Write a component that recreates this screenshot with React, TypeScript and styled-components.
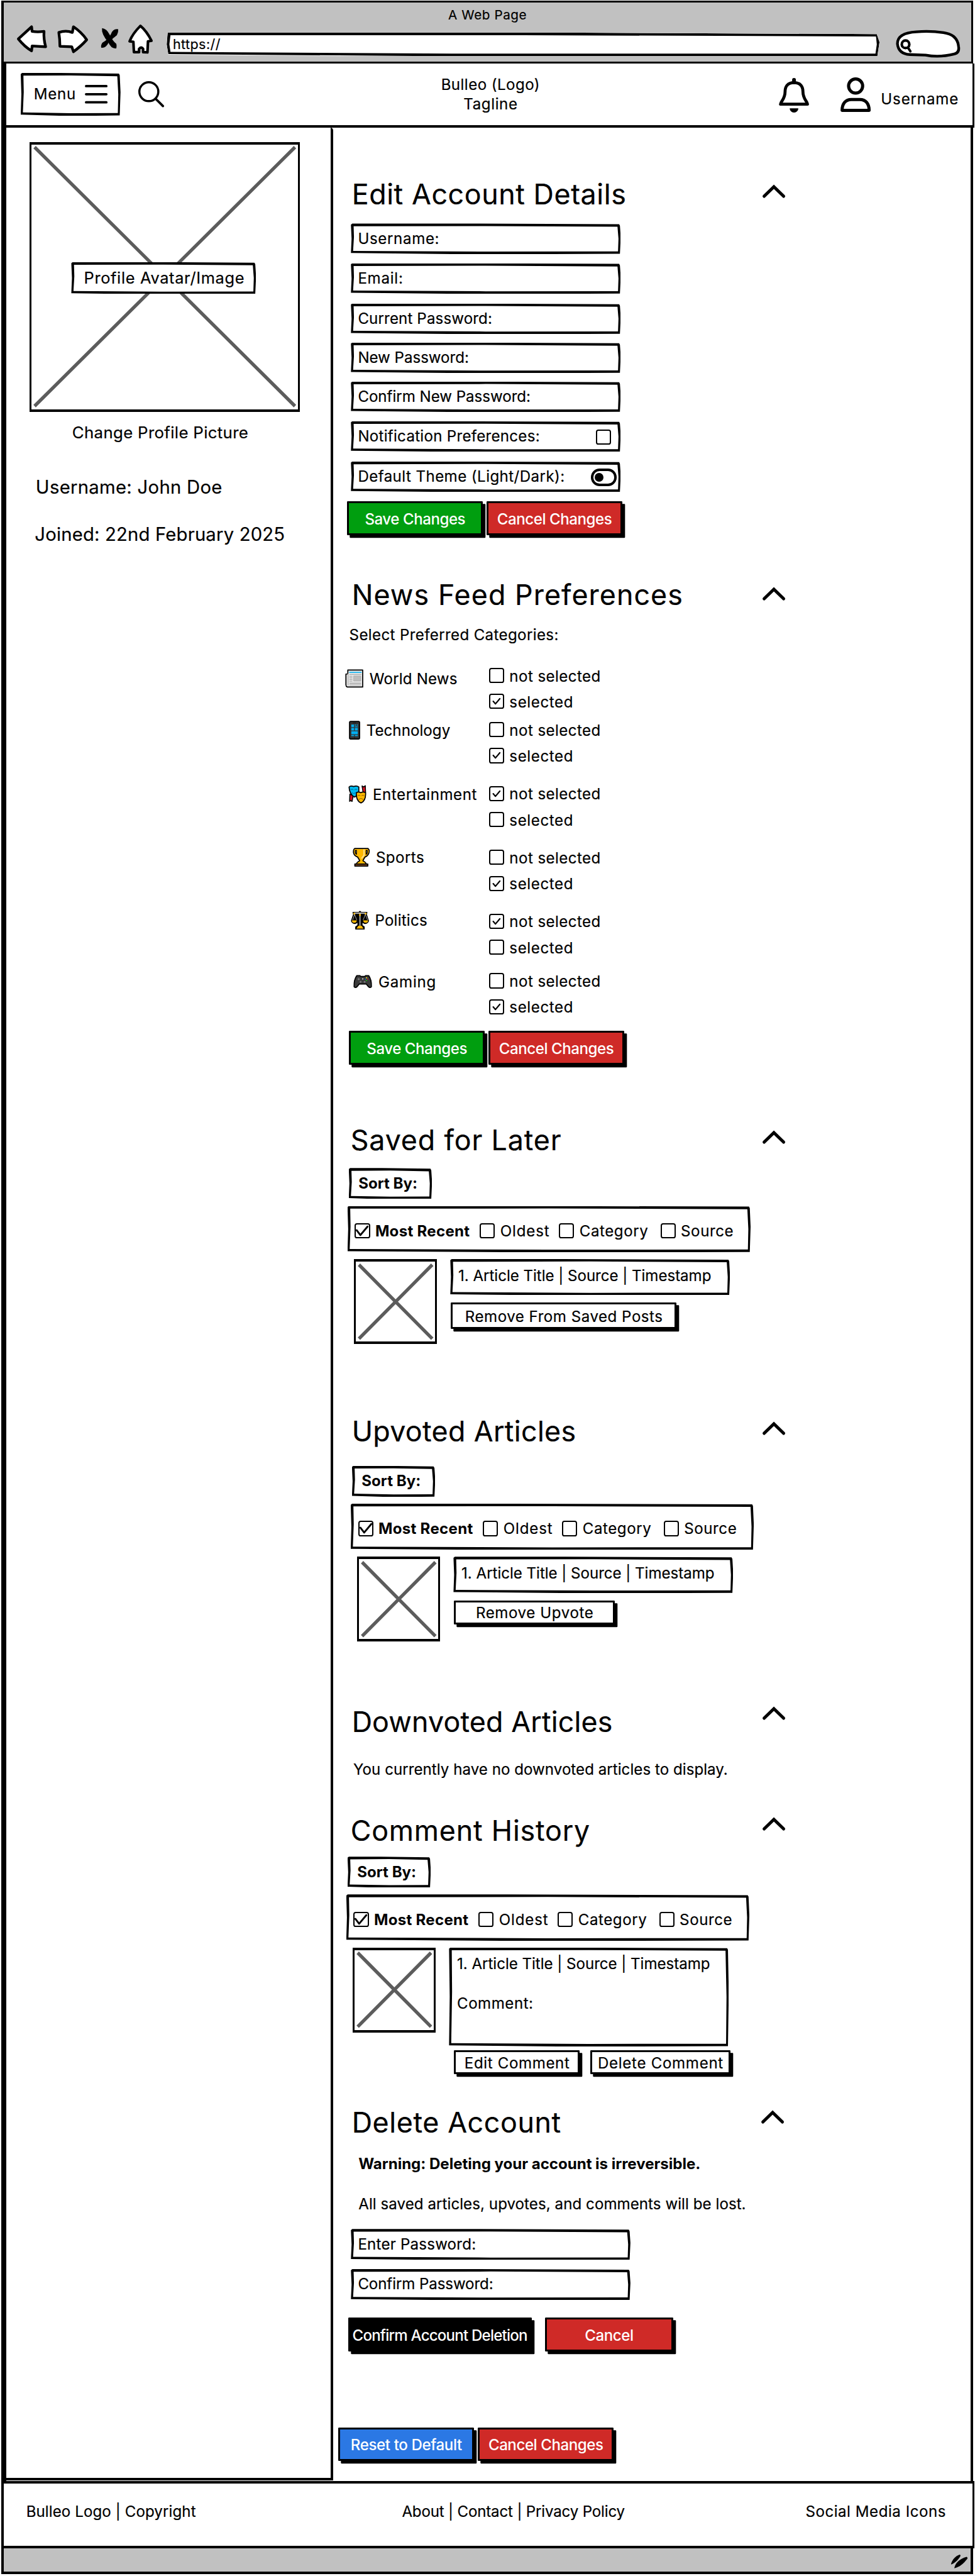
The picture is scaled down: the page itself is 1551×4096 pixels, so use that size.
import React, { useLayoutEffect, useRef, useState } from 'react';
import styled, { createGlobalStyle, css } from 'styled-components';

/* One rem is ten design units, so 2.8rem is a 28-unit text size. */
const GlobalStyle = createGlobalStyle`
  *, *::before, *::after { box-sizing: border-box; }
  html { font-size: 8.607px; background: #fff; }
  body { margin: 0; overflow: hidden; }
  body, button { font-family: Inter, "Open Sans", sans-serif; color: #000; }
  svg { display: block; flex: none; overflow: visible; }
`;

const GREEN = '#009e0f';
const RED = '#cf2a27';
const BLUE = '#2b78e4';
const GREY = '#c1c1c1';

/* ---------- text ---------- */

const TextBox = styled.span<{ $w: number; $size: number; $lh: number; $weight: number; $color: string; $dy: number }>`
  display: block;
  flex: none;
  width: ${p => p.$w / 10}rem;
  font-size: ${p => p.$size / 10}rem;
  line-height: ${p => p.$lh / 10}rem;
  font-weight: ${p => p.$weight};
  color: ${p => p.$color};
  margin: ${p => p.$dy / 10 + 0.18}rem 0 -0.18rem;
  white-space: nowrap;
  -webkit-text-stroke: ${p => (p.$weight === 400 ? 0.2 : 0)}px;
`;

const TextRun = styled.span`
  display: inline-block;
  margin-left: -0.045em;
`;

type TextProps = {
  children: string;
  w: number;
  size?: number;
  lh?: number;
  weight?: number;
  color?: string;
  dy?: number;
};

/* Tracks its letters out or in so that the line fills the width it is given. */
function Text({ children, w, size = 28, lh = 40, weight = 400, color = '#000', dy = 0 }: TextProps) {
  const ref = useRef<HTMLSpanElement>(null);
  const [tracking, setTracking] = useState(0);
  useLayoutEffect(() => {
    const el = ref.current;
    if (!el) return;
    const previous = el.style.letterSpacing;
    el.style.letterSpacing = '0px';
    const natural = el.getBoundingClientRect().width;
    el.style.letterSpacing = previous;
    const em = size * 0.8607;
    setTracking((w * 0.8607 - natural + em * 0.11) / (children.length - 1));
  }, [children, w, size, weight]);
  return (
    <TextBox $w={w} $size={size} $lh={lh} $weight={weight} $color={color} $dy={dy}>
      <TextRun ref={ref} style={{ letterSpacing: `${tracking}px` }}>{children}</TextRun>
    </TextBox>
  );
}

/* ---------- hand-drawn outline ---------- */

const sketchFrame = css`
  position: relative;
  background: #fff;
  &::after {
    content: '';
    position: absolute;
    inset: 0;
    pointer-events: none;
    background: #000;
    clip-path: polygon(evenodd,
      0 0.2rem, 0.25rem 0, 40% 0, calc(100% - 0.3rem) 0.12rem, calc(100% - 0.15rem) 0.4rem,
      100% 45%, calc(100% - 0.15rem) 100%, 50% calc(100% + 0.1rem), 0 calc(100% - 0.15rem),
      0.12rem 50%, 0 0.2rem,
      0.5rem 0.5rem, 0.56rem 45%, 0.4rem calc(100% - 0.55rem), 50% calc(100% - 0.42rem),
      calc(100% - 0.5rem) calc(100% - 0.45rem), calc(100% - 0.42rem) 50%,
      calc(100% - 0.6rem) 0.6rem, 50% 0.46rem, 0.5rem 0.5rem);
  }
`;

/* ---------- browser window ---------- */

const Page = styled.div`
  width: 180.2rem;
  height: 475.8rem;
  padding: 0.13rem 0 0 0.2rem;
  background: #fff;
`;

const Chrome = styled.div`
  width: 179.6rem;
  height: 11.6rem;
  border: solid #000;
  border-width: 0.45rem 0.45rem 0.46rem 0.5rem;
  background: ${GREY};
`;

const ChromeTitle = styled.div`
  display: flex;
  justify-content: center;
  padding-top: 0.12rem;
`;

const ChromeBar = styled.div`
  display: flex;
  align-items: flex-start;
  padding-left: 2.5rem;
  margin-top: -0.1rem;
`;

const Slot = styled.div<{ $ml?: number; $mt?: number }>`
  flex: none;
  margin: ${p => (p.$mt ?? 0) / 10}rem 0 0 ${p => (p.$ml ?? 0) / 10}rem;
`;

const UrlField = styled.div`
  ${sketchFrame}
  display: flex;
  align-items: center;
  flex: none;
  width: 131.75rem;
  height: 4.4rem;
  margin: 1.5rem 0 0 2.5rem;
  padding: 0 0 0.4rem 1.25rem;
  clip-path: polygon(0.15rem 0, 50% 0, calc(100% - 0.5rem) 0.3rem, 100% 1.8rem, calc(100% - 0.4rem) 100%, 30% 100%, 0.3rem calc(100% - 0.3rem), 0 50%);
  &::after {
    clip-path: polygon(evenodd,
      0.2rem 0, 50% 0, calc(100% - 0.5rem) 0.3rem, 100% 1.8rem, calc(100% - 0.4rem) 100%, 40% 100%, 0.3rem calc(100% - 0.4rem), 0 50%, 0.2rem 0,
      0.7rem 0.5rem, 0.5rem 50%, 0.7rem calc(100% - 0.8rem), 40% calc(100% - 0.5rem), calc(100% - 0.75rem) calc(100% - 0.5rem),
      calc(100% - 0.5rem) 50%, calc(100% - 0.65rem) 0.75rem, 50% 0.5rem, 0.7rem 0.5rem);
  }
`;

const Header = styled.header`
  display: flex;
  align-items: center;
  width: 179.9rem;
  height: 11.82rem;
  padding-left: 2.7rem;
  border: solid #000;
  border-width: 0 0.4rem 0.5rem 0.95rem;
`;

const MenuButton = styled.button`
  ${sketchFrame}
  display: flex;
  align-items: center;
  gap: 1.9rem;
  width: 18.45rem;
  height: 7.85rem;
  padding: 0 0 0 2.55rem;
  border: 0;
`;

const Brand = styled.div`
  display: flex;
  flex-direction: column;
  align-items: center;
  margin-left: 51.27rem;
`;

const Body = styled.div`
  display: flex;
  width: 179.65rem;
  height: 434.85rem;
  border: solid #000;
  border-width: 0 0.5rem 0 0.95rem;
`;

const Sidebar = styled.aside`
  flex: none;
  width: 60.4rem;
  height: 434.72rem;
  border: solid #000;
  border-width: 0 0.5rem 0.5rem 0;
  border-top-right-radius: 0.5rem;
`;

const Main = styled.main`
  flex: 1;
  padding-top: 9.26rem;
`;

const Footer = styled.footer`
  display: flex;
  align-items: center;
  width: 179.9rem;
  height: 12.35rem;
  padding: 0 0 1.4rem 4.3rem;
  border: solid #000;
  border-width: 0.55rem 0.4rem 0.55rem 0.55rem;
`;

const StatusBar = styled.div`
  display: flex;
  justify-content: flex-end;
  width: 179.6rem;
  height: 4.85rem;
  padding: 1.2rem 0.5rem 0 0;
  border: solid #000;
  border-width: 0 0.5rem 0.5rem 0.5rem;
  background: ${GREY};
`;

/* ---------- sidebar ---------- */

const Placeholder = styled.div<{ $w: number; $h: number }>`
  display: grid;
  place-items: center;
  flex: none;
  width: ${p => p.$w / 10}rem;
  height: ${p => p.$h / 10}rem;
  border: solid #000;
  border-width: 0.5rem 0.45rem;
  background: #fff;
  > * { grid-area: 1 / 1; }
`;

const Cross = styled.svg`
  width: calc(100% - 1.1rem);
  height: calc(100% - 1.1rem);
  stroke: #5c5c5c;
  stroke-width: 0.62rem;
`;

const AvatarLabel = styled.div`
  ${sketchFrame}
  display: flex;
  align-items: center;
  width: 34.15rem;
  height: 5.9rem;
  padding: 0 0 0.4rem 2.47rem;
  margin: 0.4rem 0.3rem 0 0;
`;

/* ---------- settings sections ---------- */

const SectionBox = styled.section<{ $h: number }>`
  height: ${p => p.$h / 10}rem;
`;

const HeadingRow = styled.div<{ $left: number }>`
  display: flex;
  justify-content: space-between;
  width: 83.58rem;
  height: 6rem;
  padding-left: ${p => p.$left / 10}rem;
`;

const Stack = styled.div<{ $top: number; $left: number }>`
  display: flow-root;
  margin: ${p => p.$top / 10}rem 0 0 ${p => p.$left / 10}rem;
`;

const Row = styled.div<{ $top?: number; $left?: number; $gap: number }>`
  display: flex;
  align-items: flex-start;
  gap: ${p => p.$gap / 10}rem;
  margin: ${p => (p.$top ?? 0) / 10}rem 0 0 ${p => (p.$left ?? 0) / 10}rem;
`;

const Field = styled.div<{ $w: number; $h: number; $after?: number }>`
  ${sketchFrame}
  display: flex;
  align-items: center;
  justify-content: space-between;
  width: ${p => p.$w / 10}rem;
  height: ${p => p.$h / 10}rem;
  margin-bottom: ${p => (p.$after ?? 0) / 10}rem;
  padding: 0 0 0.3rem 1.42rem;
`;

const Push = styled.div<{ $right: number; $top?: number }>`
  margin: ${p => (p.$top ?? 5) / 10}rem ${p => p.$right / 10}rem 0 0;
`;

const Toggle = styled.div`
  display: flex;
  align-items: center;
  width: 4.76rem;
  height: 3.2rem;
  padding-left: 0.22rem;
  border: 0.5rem solid #000;
  border-radius: 1.6rem;
  &::before {
    content: '';
    width: 1.65rem;
    height: 1.65rem;
    border-radius: 50%;
    background: #000;
  }
`;

const PushButton = styled.button<{ $w: number; $h: number; $fill: string }>`
  display: flex;
  align-items: center;
  justify-content: center;
  flex: none;
  width: ${p => p.$w / 10}rem;
  height: ${p => p.$h / 10}rem;
  padding: 0;
  border: 0.42rem solid #000;
  border-radius: 0.15rem;
  background: ${p => p.$fill};
  box-shadow: 0.5rem 0.5rem 0 #000;
`;

const CategoryRow = styled.div<{ $after: number }>`
  display: grid;
  grid-template-columns: 28.85rem auto;
  align-items: start;
  height: 7.6rem;
  margin-bottom: ${p => p.$after / 10}rem;
`;

const CategoryName = styled.div<{ $left: number; $shift: number }>`
  display: flex;
  align-items: center;
  gap: 1.25rem;
  height: 4rem;
  margin: ${p => p.$shift / 10}rem 0 0 ${p => p.$left / 10}rem;
`;

const Options = styled.div`
  display: flex;
  flex-direction: column;
  gap: 2rem;
`;

const Option = styled.div`
  display: flex;
  align-items: center;
  gap: 1.1rem;
  height: 2.8rem;
`;

const Check = styled.div`
  flex: none;
  width: 2.8rem;
  height: 2.8rem;
  border: 0.34rem solid #000;
  border-radius: 0.45rem;
  svg { width: 100%; height: 100%; }
`;

const SortTag = styled.div`
  ${sketchFrame}
  display: flex;
  align-items: center;
  width: 15.4rem;
  height: 5.7rem;
  padding: 0 0 0.3rem 1.92rem;
`;

const FilterBar = styled.div`
  ${sketchFrame}
  display: flex;
  align-items: center;
  width: 74.5rem;
  height: 8.5rem;
  margin: 1.3rem 0 0 -0.23rem;
  padding: 0.7rem 0 0 1.35rem;
`;

const Card = styled.div<{ $h: number }>`
  ${sketchFrame}
  width: 51.7rem;
  height: ${p => p.$h / 10}rem;
  padding: 0.94rem 0 0 1.6rem;
`;

/* ---------- drawings ---------- */

const u = (n: number) => `${n / 10}rem`;

type DrawingProps = { w: number; h: number; children: React.ReactNode };
const Drawing = ({ w, h, children }: DrawingProps) => (
  <svg viewBox={`0 0 ${w} ${h}`} style={{ width: u(w), height: u(h) }} fill="none" stroke="#000" strokeLinecap="round" strokeLinejoin="round">
    {children}
  </svg>
);

const BackArrow = () => (
  <Drawing w={55} h={50}>
    <path d="M2.5 25.5 27 3 28 11.5Q38 13 50 11.5 49 25 53 40L28 38.5 27 47.5Q14 40 2.5 25.5Z" fill="#fff" strokeWidth="5" />
  </Drawing>
);
const ForwardArrow = () => (
  <Drawing w={57} h={52}>
    <path d="M3 13.5Q16 9 28 13.5L30 3Q45 13 54.500 27 44 39 30 49L27 40 5 39Q5 26 3 13.500Z" fill="#fff" strokeWidth="5" />
  </Drawing>
);
const StopIcon = () => (
  <Drawing w={32} h={39}>
    <path d="M1.500 1Q10 2 15 12 22 26 28 30 29 34 28 38 19 40 13 27 0 12 1.500 1Z" fill="#000" stroke="none" />
    <path d="M31.500 3Q22 1 18 12 13 22 2 28 -1 33 0 37 9 38 14 27 21 20 29 14 32 8 31.500 3Z" fill="#000" stroke="none" />
  </Drawing>
);
const HomeIcon = () => (
  <Drawing w={46} h={54}>
    <path d="M22.500 2.500Q34 12 43 30L36.500 31 35.500 51.500 27.500 51V45Q24 40 20 45V51H10.500L9.500 32 2.500 31Q8 17 22.500 2.500Z" fill="#fff" strokeWidth="4.800" />
  </Drawing>
);
const SearchPill = () => (
  <Drawing w={119} h={50}>
    <path d="M26 45Q5 44 3 25 3 5 38 3 64 1 88 4.500 114 8 116 30 118 42 108 44 80 51 55 46L26 45Z" fill="#fff" strokeWidth="5" />
    <circle cx="18" cy="26" r="7" strokeWidth="4.800" />
    <path d="M23 33 27 39" strokeWidth="4.500" />
  </Drawing>
);
const Hamburger = () => (
  <Drawing w={42} h={34}>
    <path d="M2.200 2.200H39.800M2.200 17.200H39.800M2.200 32.200H39.800" strokeWidth="4.300" />
  </Drawing>
);
const SearchIcon = () => (
  <Drawing w={48} h={48}>
    <circle cx="19.500" cy="19.500" r="17.500" strokeWidth="4" />
    <path d="M32 32.500 45.500 46" strokeWidth="4.300" />
  </Drawing>
);
const Bell = () => (
  <Drawing w={56} h={64}>
    <path d="M28 3.500V8" strokeWidth="7" />
    <path d="M28 8.500C16 8.500 11.500 16 11.500 25 11.500 39 4 42 3 48.500H53C52 42 44.500 39 44.500 25 44.500 16 40 8.500 28 8.500Z" strokeWidth="5.500" />
    <path d="M20 56H36A8 8 0 0 1 20 56Z" fill="#000" stroke="none" />
  </Drawing>
);
const Person = () => (
  <Drawing w={56} h={64}>
    <circle cx="28" cy="16" r="13" strokeWidth="5.800" />
    <path d="M3 61C3 48 10 41 20 41H36C46 41 53 48 53 61Z" strokeWidth="5.800" />
  </Drawing>
);
const Chevron = () => (
  <Drawing w={42} h={24}>
    <path d="M3 21 21 3.500 39 21" strokeWidth="5.800" strokeLinejoin="miter" />
  </Drawing>
);
const Grip = () => (
  <Drawing w={32} h={26}>
    <path d="M1 18C3 9 10 2 17 0Q20 1 17 5 11 14 2 18ZM7 25C9 15 18 7 30 4Q33 6 30 9 20 22 8 25Z" fill="#000" stroke="none" />
  </Drawing>
);

const Newspaper = () => (
  <Drawing w={34} h={34.5}>
    <path d="M5 1.500H32.500V33H4Q1.500 32 1.500 29V9H5Z" fill="#e9e9e9" strokeWidth="2" />
    <path d="M5.500 9V29" stroke="#bbb" strokeWidth="2" />
    <path d="M8.500 6H29.500" stroke="#1ab4ee" strokeWidth="2.200" />
    <path d="M8.500 9.500H29.500M8.500 13H13M8.500 16H13M8.500 19H13M8.500 22H13M8.500 26H29M8.500 29H29" stroke="#999" strokeWidth="1.200" />
    <path d="M16 12.500H29V22H16Z" fill="#bdbdbd" stroke="#aaa" strokeWidth="1" />
  </Drawing>
);
const Phone = () => (
  <Drawing w={21} h={35}>
    <rect x="1.200" y="1.200" width="18.600" height="32.600" rx="2" fill="#333" strokeWidth="2" />
    <path d="M4.500 7H9.500V12H4.500ZM11 7H13V9H11ZM14.500 7H16.500V9H14.500ZM11 10.500H16.500V12H11ZM4.500 13.500H9.500V18H4.500ZM11 13.500H16.500V18H11ZM4.500 19.500H16.500V25H4.500ZM4.500 26.500H9.500V28.500H4.500ZM11 26.500H16.500V28.500H11Z" fill="#00adef" stroke="none" />
    <path d="M8 4H13M10 31.300H11" stroke="#111" strokeWidth="1" />
  </Drawing>
);
const Masks = () => (
  <Drawing w={34} h={34.5}>
    <path d="M3 17 2.500 30.500 4.500 29 7 30.500 9 20ZM27.500 14 25.500 2 28.500 4 31.500 1.500 32 14Z" fill="#e81224" strokeWidth="1.800" />
    <path d="M1.500 4Q4 1 10 3 16 1 19.500 4V13Q18 20 11 22.500 2 16 1.500 4Z" fill="#00bcf2" strokeWidth="2" />
    <path d="M15 14.500Q19 12 23 14.500 28 12 32 14.500 33 29 23.500 33.500 14 29 15 14.500Z" fill="#ffb900" strokeWidth="2" />
    <path d="M5 9Q7 7 9 9M12 9Q14 7 16 9M7 14Q11 18 13 14" stroke="#0078a8" strokeWidth="1.300" />
    <path d="M18 20Q20 18 22 20M25 20Q27 18 29 20M20 27Q23.500 23 27 27" stroke="#a56a00" strokeWidth="1.300" />
  </Drawing>
);
const Trophy = () => (
  <Drawing w={32} h={35}>
    <path d="M4 1.200H28Q32 4 30 10 28 15 23 17 20 21 19 24 25 27 25 30H7Q7 27 13 24 12 21 9 17 3 15 1.500 9 1 3 4 1.200Z" fill="#ffb900" strokeWidth="2" />
    <path d="M4 30H28V33.800H4Z" fill="#8e562e" strokeWidth="2" />
    <path d="M5 5Q4 10 7 12V5ZM27 5Q28 10 25 12V5Z" fill="#fff" strokeWidth="1.700" />
    <path d="M21 4V14L17 19" stroke="#ffdf8a" strokeWidth="2.500" />
  </Drawing>
);
const Scales = () => (
  <Drawing w={34} h={35}>
    <path d="M17 1 19 3H30L29 7 33 19Q31 24 26 24 22 23 21 19V27L25 30V34H9V30L13 27V19Q12 23 8 24 3 24 1 19L5 7 4 3H15Z" fill="#000" strokeWidth="1.500" />
    <path d="M7 7 3.500 17M7 7 11 17M27 7 23 17M27 7 31 17" stroke="#bbb" strokeWidth="1" />
    <path d="M6 4.500H28M17 6V28" stroke="#cfcfcf" strokeWidth="1.800" />
    <path d="M2 18H11Q11 22 6.500 22.500 2 22 2 18ZM23 18H32Q32 22 27.500 22.500 23 22 23 18ZM14 28H20L23.500 33H10.500ZM5 4H8V7H5ZM26 4H29V7H26ZM15.500 6H18.500V10H15.500Z" fill="#ffb900" stroke="none" />
  </Drawing>
);
const Gamepad = () => (
  <Drawing w={35} h={25}>
    <path d="M6.500 1.500H12L14 3H21L23 1.500H28.500Q34 9 33.500 22 31 25 28 22L24 17H11L7 22Q4 25 1.500 22 1 9 6.500 1.500Z" fill="#3b3b3b" strokeWidth="2" />
    <circle cx="10" cy="8" r="2" fill="#777" stroke="none" />
    <circle cx="21" cy="13" r="1.700" fill="#777" stroke="none" />
    <circle cx="13.500" cy="13" r="1.700" fill="#777" stroke="none" />
    <circle cx="17.500" cy="7.500" r="1.200" fill="#ddd" stroke="none" />
    <circle cx="24.500" cy="5.500" r="1.100" fill="#fff100" stroke="none" />
    <circle cx="26.500" cy="8" r="1.100" fill="#e81224" stroke="none" />
    <circle cx="24.500" cy="10.500" r="1.100" fill="#16c60c" stroke="none" />
    <circle cx="22.500" cy="8" r="1.100" fill="#0078d7" stroke="none" />
  </Drawing>
);

const CrossLines = () => (
  <Cross viewBox="0 0 100 100" preserveAspectRatio="none">
    <path d="M0 0 100 100M100 0 0 100" vectorEffect="non-scaling-stroke" />
  </Cross>
);

/* ---------- shared pieces ---------- */

function Checkbox({ mark }: { mark?: 'small' | 'large' }) {
  return (
    <Check>
      {mark && (
        <svg viewBox="0 0 22 22" fill="none" stroke="#000" strokeWidth={mark === 'small' ? 2.4 : 3.2} strokeLinecap="round" strokeLinejoin="round">
          <path d={mark === 'small' ? 'M5 11 9 15.500 16.500 6.500' : 'M1.500 10 8 18.500 20.500 3.500'} />
        </svg>
      )}
    </Check>
  );
}

type SectionProps = { title: string; w: number; left?: number; h: number; chevronTop: number; chevronInset?: number; children: React.ReactNode };
function Section({ title, w, left = 37.3, h, chevronTop, chevronInset = 0, children }: SectionProps) {
  return (
    <SectionBox $h={h}>
      <HeadingRow $left={left}>
        <Text w={w} size={52} lh={60}>{title}</Text>
        <Push $right={chevronInset} $top={chevronTop}><Chevron /></Push>
      </HeadingRow>
      {children}
    </SectionBox>
  );
}

type ActionProps = { label: string; textW: number; w?: number; h?: number; fill?: string };
function Action({ label, textW, w = 250.6, h = 62, fill = '#fff' }: ActionProps) {
  const dark = fill !== '#fff';
  return (
    <PushButton $w={w} $h={h} $fill={fill}>
      <Text w={textW} lh={30} weight={dark ? 500 : 400} color={dark ? '#fff' : '#000'}>{label}</Text>
    </PushButton>
  );
}

const FIELDS = [
  { label: 'Username:', w: 147, after: 17.4 },
  { label: 'Email:', w: 80, after: 18.4 },
  { label: 'Current Password:', w: 245, after: 16.1 },
  { label: 'New Password:', w: 202, after: 16.1 },
  { label: 'Confirm New Password:', w: 316, after: 17.4 },
];

const CATEGORIES = [
  { name: 'World News', w: 159, left: 22.5, shift: -0.5, icon: <Newspaper />, picked: true, after: 24 },
  { name: 'Technology', w: 152, left: 29.5, shift: -4.9, icon: <Phone />, picked: true, after: 42 },
  { name: 'Entertainment', w: 189, left: 28.5, shift: -4.5, icon: <Masks />, picked: false, after: 42 },
  { name: 'Sports', w: 86, left: 36.2, shift: -6.5, icon: <Trophy />, picked: true, after: 42 },
  { name: 'Politics', w: 93.5, left: 32.5, shift: -8.5, icon: <Scales />, picked: false, after: 34 },
  { name: 'Gaming', w: 103, left: 37.9, shift: -4.5, icon: <Gamepad />, picked: true, after: 31 },
];

const FILTERS = [
  { label: 'Oldest', w: 87.5, before: 20.5 },
  { label: 'Category', w: 123.5, before: 20 },
  { label: 'Source', w: 94, before: 25 },
];

type ArticleListProps = { top: number; left: number; cardHeight: number; comment?: boolean; children: React.ReactNode };
function ArticleList({ top, left, cardHeight, comment, children }: ArticleListProps) {
  return (
    <Stack $top={top} $left={left}>
      <SortTag><Text w={106} weight={700}>Sort By:</Text></SortTag>
      <FilterBar>
        <Option>
          <Checkbox mark="large" />
          <Text w={171.5} lh={28} weight={700} dy={-2}>Most Recent</Text>
        </Option>
        {FILTERS.map(f => (
          <Slot key={f.label} $ml={f.before}>
            <Option>
              <Checkbox />
              <Text w={f.w} lh={28} dy={-2}>{f.label}</Text>
            </Option>
          </Slot>
        ))}
      </FilterBar>
      <Row $top={13} $left={9.7} $gap={24.5}>
        <Placeholder $w={153.5} $h={157}><CrossLines /></Placeholder>
        <div>
          <Card $h={cardHeight}>
            <Text w={464.5}>1. Article Title | Source | Timestamp</Text>
            {comment && <Text w={137.5} dy={32.3}>Comment:</Text>}
          </Card>
          {children}
        </div>
      </Row>
    </Stack>
  );
}

export default function App() {
  return (
    <>
      <GlobalStyle />
      <Page>
        <Chrome>
          <ChromeTitle><Text w={142} size={24}>A Web Page</Text></ChromeTitle>
          <ChromeBar>
            <Slot $mt={2}><BackArrow /></Slot>
            <Slot $ml={19} $mt={2}><ForwardArrow /></Slot>
            <Slot $ml={25} $mt={5.7}><StopIcon /></Slot>
            <Slot $ml={17.5}><HomeIcon /></Slot>
            <UrlField><Text w={85} size={25}>https://</Text></UrlField>
            <Slot $ml={29.5} $mt={11}><SearchPill /></Slot>
          </ChromeBar>
        </Chrome>

        <Header>
          <MenuButton>
            <Text w={74} dy={-3}>Menu</Text>
            <Hamburger />
          </MenuButton>
          <Slot $ml={33}><SearchIcon /></Slot>
          <Brand>
            <Text w={179.3} lh={36}>Bulleo (Logo)</Text>
            <Text w={96.5} lh={36}>Tagline</Text>
          </Brand>
          <Slot $ml={444} $mt={5}><Bell /></Slot>
          <Slot $ml={58} $mt={1}><Person /></Slot>
          <Slot $ml={19.7} $mt={15}><Text w={139.8}>Username</Text></Slot>
        </Header>

        <Body>
          <Sidebar>
            <Stack $top={26.8} $left={43.1}>
              <Placeholder $w={499.3} $h={498.7}>
                <CrossLines />
                <AvatarLabel><Text w={293} size={29.500}>Profile Avatar/Image</Text></AvatarLabel>
              </Placeholder>
            </Stack>
            <Stack $top={17} $left={123.5}><Text w={322} size={30}>Change Profile Picture</Text></Stack>
            <Stack $top={61} $left={56.3}><Text w={340.8} size={34}>Username: John Doe</Text></Stack>
            <Stack $top={47} $left={54.5}><Text w={458.5} size={34}>Joined: 22nd February 2025</Text></Stack>
          </Sidebar>

          <Main>
            <Section title="Edit Account Details" w={501} h={739.7} chevronTop={13}>
              <Stack $top={24.9} $left={33.3}>
                {FIELDS.map(f => (
                  <Field key={f.label} $w={498.7} $h={56} $after={f.after}><Text w={f.w}>{f.label}</Text></Field>
                ))}
                <Field $w={498.7} $h={56} $after={18.4}>
                  <Text w={333}>Notification Preferences:</Text>
                  <Push $right={17.5}><Checkbox /></Push>
                </Field>
                <Field $w={498.7} $h={56}>
                  <Text w={379}>Default Theme (Light/Dark):</Text>
                  <Push $right={8}><Toggle /></Push>
                </Field>
              </Stack>
              <Row $top={17.9} $left={26.5} $gap={7.1}>
                <Action label="Save Changes" textW={183} fill={GREEN} />
                <Action label="Cancel Changes" textW={209.5} fill={RED} />
              </Row>
            </Section>

            <Section title="News Feed Preferences" w={605.7} h={1007.3} chevronTop={17}>
              <Stack $top={23.7} $left={31.5}><Text w={383.5}>Select Preferred Categories:</Text></Stack>
              <Stack $top={42.5} $left={0}>
                {CATEGORIES.map(c => (
                  <CategoryRow key={c.name} $after={c.after}>
                    <CategoryName $left={c.left} $shift={c.shift}>
                      {c.icon}
                      <Text w={c.w}>{c.name}</Text>
                    </CategoryName>
                    <Options>
                      <Option>
                        <Checkbox mark={c.picked ? undefined : 'small'} />
                        <Text w={165.300} lh={28}>not selected</Text>
                      </Option>
                      <Option>
                        <Checkbox mark={c.picked ? 'small' : undefined} />
                        <Text w={114.300} lh={28}>selected</Text>
                      </Option>
                    </Options>
                  </CategoryRow>
                ))}
              </Stack>
              <Row $left={29.9} $gap={7.2}>
                <Action label="Save Changes" textW={183} fill={GREEN} />
                <Action label="Cancel Changes" textW={209.5} fill={RED} />
              </Row>
            </Section>

            <Section title="Saved for Later" w={383.5} left={35} h={538} chevronTop={14}>
              <ArticleList top={22.9} left={29.3} cardHeight={66.7}>
                <Row $top={14} $left={1} $gap={0}>
                  <Action label="Remove From Saved Posts" textW={362} w={417} h={48.3} />
                </Row>
              </ArticleList>
            </Section>

            <Section title="Upvoted Articles" w={408.500} h={537.3} chevronTop={14}>
              <ArticleList top={34.9} left={35.2} cardHeight={66.7}>
                <Row $top={14} $left={1} $gap={0}>
                  <Action label="Remove Upvote" textW={214} w={297} h={44} />
                </Row>
              </ArticleList>
            </Section>

            <Section title="Downvoted Articles" w={476} h={201.5} chevronTop={2.6}>
              <Stack $top={37.4} $left={39}>
                <Text w={689}>You currently have no downvoted articles to display.</Text>
              </Stack>
            </Section>

            <Section title="Comment History" w={436.300} left={35} h={538.2} chevronTop={6.4}>
              <ArticleList top={18.1} left={27} cardHeight={182.2} comment>
                <Row $top={7.6} $left={8.6} $gap={18.8}>
                  <Action label="Edit Comment" textW={191} w={233.2} h={44} />
                  <Action label="Delete Comment" textW={228.500} w={259.6} h={44} />
                </Row>
              </ArticleList>
            </Section>

            <Section title="Delete Account" w={380.6} h={594.3} chevronTop={9} chevronInset={2.3}>
              <Stack $top={26.7} $left={48.5}>
                <Text w={629} weight={700}>Warning: Deleting your account is irreversible.</Text>
                <Text w={713} dy={34.3}>All saved articles, upvotes, and comments will be lost.</Text>
              </Stack>
              <Stack $top={26.9} $left={33.3}>
                <Field $w={516.6} $h={57} $after={17}><Text w={215}>Enter Password:</Text></Field>
                <Field $w={516.6} $h={57}><Text w={247}>Confirm Password:</Text></Field>
              </Stack>
              <Row $top={33} $left={28} $gap={24}>
                <Action label="Confirm Account Deletion" textW={321} w={339.5} h={62.5} fill="#000" />
                <Action label="Cancel" textW={87.500} w={238} h={62.5} fill={RED} />
              </Row>
            </Section>

            <Row $left={10.3} $gap={7.2}>
              <Action label="Reset to Default" textW={203} fill={BLUE} />
              <Action label="Cancel Changes" textW={209.5} fill={RED} />
            </Row>
          </Main>
        </Body>

        <Footer>
          <Text w={310.5}>Bulleo Logo | Copyright</Text>
          <Slot $ml={384}><Text w={409}>About | Contact | Privacy Policy</Text></Slot>
          <Slot $ml={337}><Text w={256}>Social Media Icons</Text></Slot>
        </Footer>
        <StatusBar><Grip /></StatusBar>
      </Page>
    </>
  );
}
